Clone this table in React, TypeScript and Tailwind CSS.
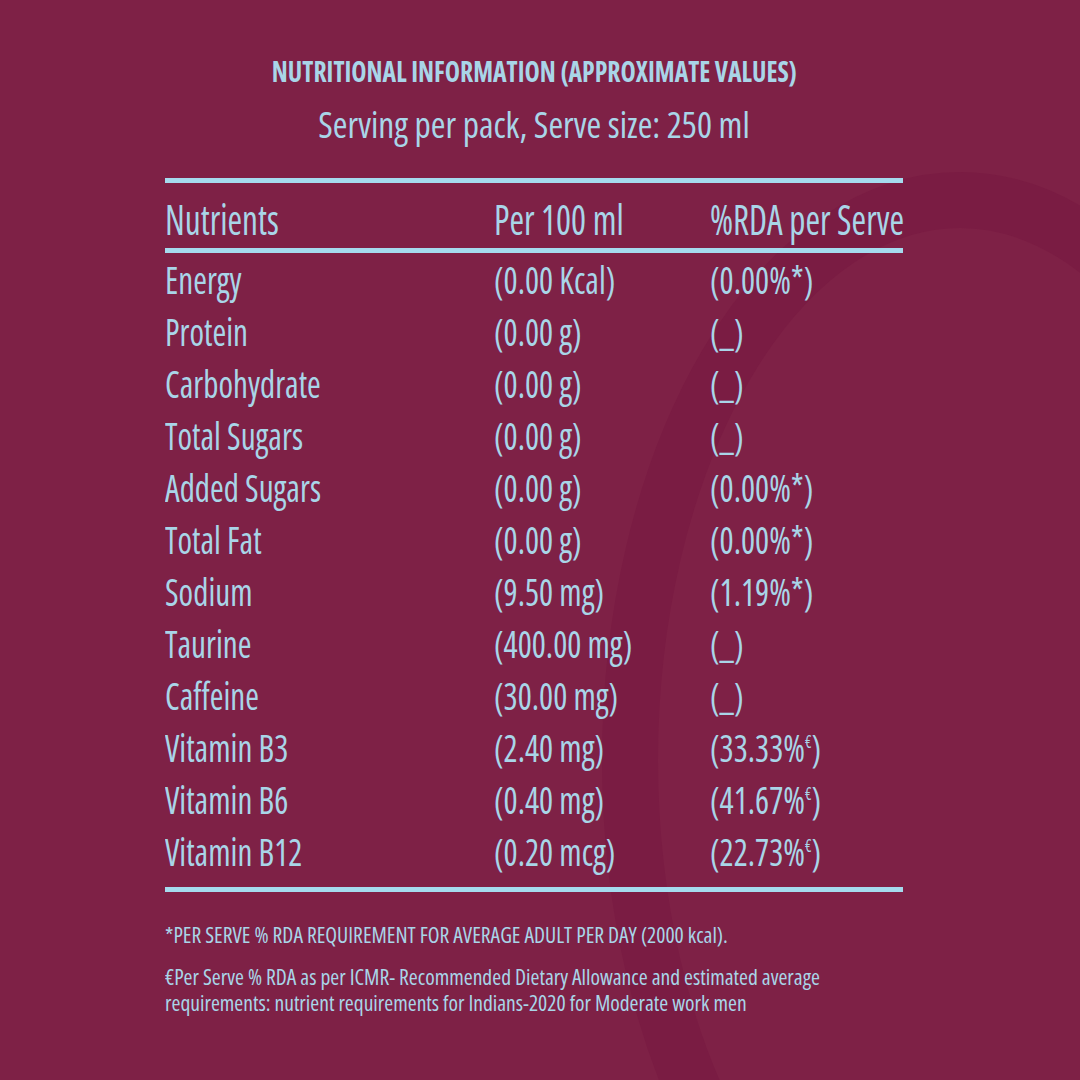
import React from "react";

const rows: [string, string, string][] = [
  ["Energy", "(0.00 Kcal)", "(0.00%*)"],
  ["Protein", "(0.00 g)", "(_)"],
  ["Carbohydrate", "(0.00 g)", "(_)"],
  ["Total Sugars", "(0.00 g)", "(_)"],
  ["Added Sugars", "(0.00 g)", "(0.00%*)"],
  ["Total Fat", "(0.00 g)", "(0.00%*)"],
  ["Sodium", "(9.50 mg)", "(1.19%*)"],
  ["Taurine", "(400.00 mg)", "(_)"],
  ["Caffeine", "(30.00 mg)", "(_)"],
  ["Vitamin B3", "(2.40 mg)", "euro:33.33"],
  ["Vitamin B6", "(0.40 mg)", "euro:41.67"],
  ["Vitamin B12", "(0.20 mcg)", "euro:22.73"],
];

function Cell({ children }: { children: React.ReactNode }) {
  return (
    <div className="whitespace-nowrap">
      <span className="inline-block origin-left scale-x-[0.85]">{children}</span>
    </div>
  );
}

function HeadCell({ children }: { children: React.ReactNode }) {
  return (
    <div className="whitespace-nowrap">
      <span className="inline-block origin-left scale-x-[0.86]">{children}</span>
    </div>
  );
}

function Note({ children }: { children: React.ReactNode }) {
  return (
    <div className="whitespace-nowrap">
      <span className="inline-block origin-left scale-x-[0.98]">{children}</span>
    </div>
  );
}

function Rda({ v }: { v: string }) {
  if (v.startsWith("euro:")) {
    return (
      <>
        ({v.slice(5)}%<span className="relative -top-[14px] text-[18px]">€</span>)
      </>
    );
  }
  return <>{v}</>;
}

export default function App() {
  return (
    <div className="relative w-[1080px] h-[1080px] overflow-hidden bg-[#7e2146] font-['Open_Sans',sans-serif] [font-stretch:75%] text-[#a9d5e8]">
      <svg className="absolute inset-0 w-[1080px] h-[1080px]" viewBox="0 0 1080 1080">
        <ellipse cx="960" cy="760" rx="330" ry="560" fill="none" stroke="#7a1c43" strokeWidth="56" />
      </svg>

      <div className="relative ml-[165px] w-[738px] pt-[52px]">
        <div className="flex flex-col items-center">
          <div className="text-[28px] leading-[38px] font-bold whitespace-nowrap">
            <span className="inline-block scale-x-[0.92]">NUTRITIONAL INFORMATION (APPROXIMATE VALUES)</span>
          </div>
          <div className="mt-[10px] text-[36px] leading-[49px] whitespace-nowrap">
            <span className="inline-block scale-x-[0.985]">Serving per pack, Serve size: 250 ml</span>
          </div>
        </div>

        <div className="mt-[29px] h-[5px] bg-[#a5dbee]" />

        <div className="grid grid-cols-[329px_216px_1fr] h-[65px] pt-[10px] text-[41px] leading-[52px]">
          <HeadCell>Nutrients</HeadCell>
          <HeadCell>Per 100 ml</HeadCell>
          <HeadCell>%RDA per Serve</HeadCell>
        </div>

        <div className="h-[5px] bg-[#a5dbee]" />

        <div className="flex flex-col text-[39px] leading-[52px]">
          {rows.map(([n, p, r]) => (
            <div key={n} className="grid grid-cols-[329px_216px_1fr] h-[52px]">
              <Cell>{n}</Cell>
              <Cell>{p}</Cell>
              <Cell>
                <Rda v={r} />
              </Cell>
            </div>
          ))}
        </div>

        <div className="mt-[10px] h-[5px] bg-[#a5dbee]" />

        <div className="mt-[29px] text-[22px] leading-[26px]">
          <Note>*PER SERVE % RDA REQUIREMENT FOR AVERAGE ADULT PER DAY (2000 kcal).</Note>
          <div className="mt-[16px]">
            <Note>€Per Serve % RDA as per ICMR- Recommended Dietary Allowance and estimated average</Note>
            <Note>requirements: nutrient requirements for Indians-2020 for Moderate work men</Note>
          </div>
        </div>
      </div>
    </div>
  );
}
